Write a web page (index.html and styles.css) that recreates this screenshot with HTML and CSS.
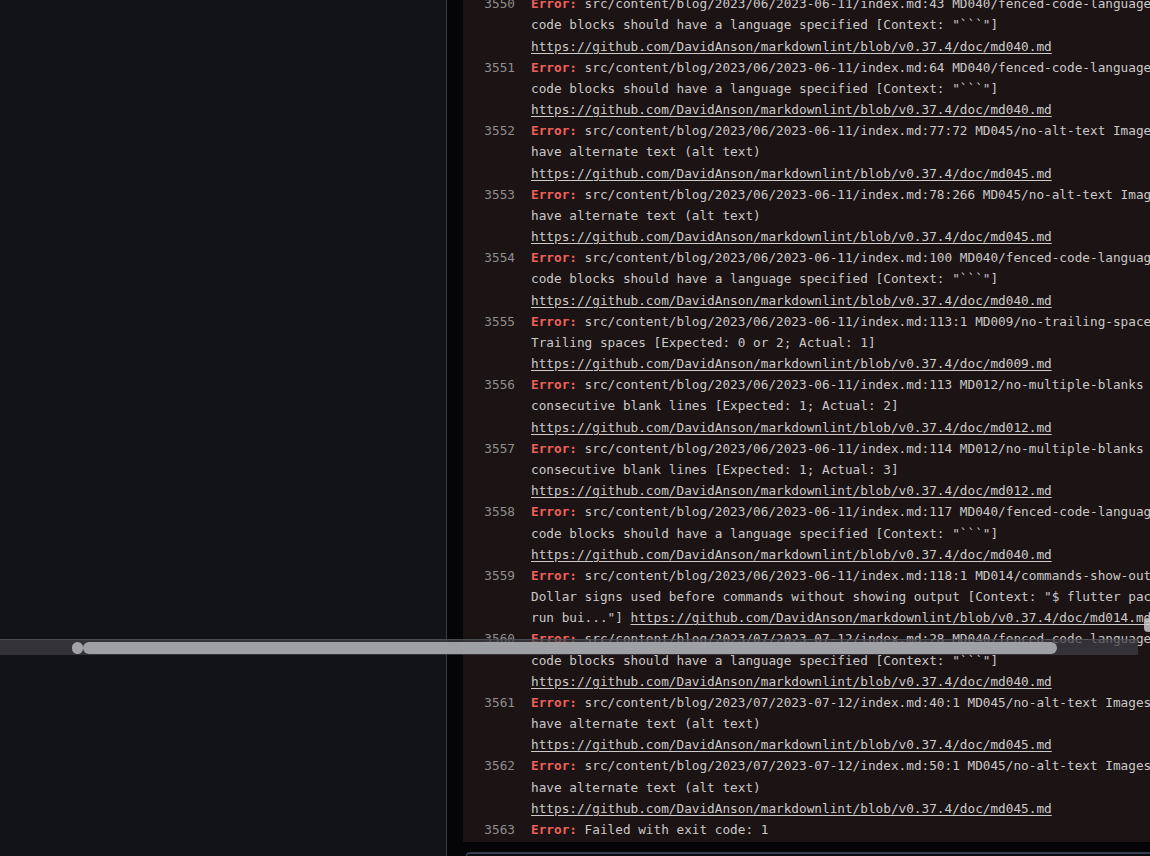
FILE: index.html
```html
<!DOCTYPE html>
<html lang="en">
<head>
    <meta charset="UTF-8">
    <meta name="viewport" content="width=device-width, initial-scale=1.0">
    <title>Lint markdown</title>
    <link rel="stylesheet" href="styles.css">
</head>
<body>
    <div class="layout">
        <aside class="sidebar"></aside>

        <main class="main">
            <div class="log">
                <div class="log-lines">
                    <div class="entry">
                        <span class="num">3550</span>
                        <div class="msg">
                            <div class="line"><span class="err">Error:</span> src/content/blog/2023/06/2023-06-11/index.md:43 MD040/fenced-code-language Fenced</div>
                            <div class="line">code blocks should have a language specified [Context: "```"]</div>
                            <div class="line"><a href="#">https://github.com/DavidAnson/markdownlint/blob/v0.37.4/doc/md040.md</a></div>
                        </div>
                    </div>
                    <div class="entry">
                        <span class="num">3551</span>
                        <div class="msg">
                            <div class="line"><span class="err">Error:</span> src/content/blog/2023/06/2023-06-11/index.md:64 MD040/fenced-code-language Fenced</div>
                            <div class="line">code blocks should have a language specified [Context: "```"]</div>
                            <div class="line"><a href="#">https://github.com/DavidAnson/markdownlint/blob/v0.37.4/doc/md040.md</a></div>
                        </div>
                    </div>
                    <div class="entry">
                        <span class="num">3552</span>
                        <div class="msg">
                            <div class="line"><span class="err">Error:</span> src/content/blog/2023/06/2023-06-11/index.md:77:72 MD045/no-alt-text Images should</div>
                            <div class="line">have alternate text (alt text)</div>
                            <div class="line"><a href="#">https://github.com/DavidAnson/markdownlint/blob/v0.37.4/doc/md045.md</a></div>
                        </div>
                    </div>
                    <div class="entry">
                        <span class="num">3553</span>
                        <div class="msg">
                            <div class="line"><span class="err">Error:</span> src/content/blog/2023/06/2023-06-11/index.md:78:266 MD045/no-alt-text Images should</div>
                            <div class="line">have alternate text (alt text)</div>
                            <div class="line"><a href="#">https://github.com/DavidAnson/markdownlint/blob/v0.37.4/doc/md045.md</a></div>
                        </div>
                    </div>
                    <div class="entry">
                        <span class="num">3554</span>
                        <div class="msg">
                            <div class="line"><span class="err">Error:</span> src/content/blog/2023/06/2023-06-11/index.md:100 MD040/fenced-code-language Fenced</div>
                            <div class="line">code blocks should have a language specified [Context: "```"]</div>
                            <div class="line"><a href="#">https://github.com/DavidAnson/markdownlint/blob/v0.37.4/doc/md040.md</a></div>
                        </div>
                    </div>
                    <div class="entry">
                        <span class="num">3555</span>
                        <div class="msg">
                            <div class="line"><span class="err">Error:</span> src/content/blog/2023/06/2023-06-11/index.md:113:1 MD009/no-trailing-spaces</div>
                            <div class="line">Trailing spaces [Expected: 0 or 2; Actual: 1]</div>
                            <div class="line"><a href="#">https://github.com/DavidAnson/markdownlint/blob/v0.37.4/doc/md009.md</a></div>
                        </div>
                    </div>
                    <div class="entry">
                        <span class="num">3556</span>
                        <div class="msg">
                            <div class="line"><span class="err">Error:</span> src/content/blog/2023/06/2023-06-11/index.md:113 MD012/no-multiple-blanks Multiple</div>
                            <div class="line">consecutive blank lines [Expected: 1; Actual: 2]</div>
                            <div class="line"><a href="#">https://github.com/DavidAnson/markdownlint/blob/v0.37.4/doc/md012.md</a></div>
                        </div>
                    </div>
                    <div class="entry">
                        <span class="num">3557</span>
                        <div class="msg">
                            <div class="line"><span class="err">Error:</span> src/content/blog/2023/06/2023-06-11/index.md:114 MD012/no-multiple-blanks Multiple</div>
                            <div class="line">consecutive blank lines [Expected: 1; Actual: 3]</div>
                            <div class="line"><a href="#">https://github.com/DavidAnson/markdownlint/blob/v0.37.4/doc/md012.md</a></div>
                        </div>
                    </div>
                    <div class="entry">
                        <span class="num">3558</span>
                        <div class="msg">
                            <div class="line"><span class="err">Error:</span> src/content/blog/2023/06/2023-06-11/index.md:117 MD040/fenced-code-language Fenced</div>
                            <div class="line">code blocks should have a language specified [Context: "```"]</div>
                            <div class="line"><a href="#">https://github.com/DavidAnson/markdownlint/blob/v0.37.4/doc/md040.md</a></div>
                        </div>
                    </div>
                    <div class="entry">
                        <span class="num">3559</span>
                        <div class="msg">
                            <div class="line"><span class="err">Error:</span> src/content/blog/2023/06/2023-06-11/index.md:118:1 MD014/commands-show-output</div>
                            <div class="line">Dollar signs used before commands without showing output [Context: "$ flutter packages pub</div>
                            <div class="line">run bui..."] <a href="#">https://github.com/DavidAnson/markdownlint/blob/v0.37.4/doc/md014.md</a></div>
                        </div>
                    </div>
                    <div class="entry">
                        <span class="num">3560</span>
                        <div class="msg">
                            <div class="line"><span class="err">Error:</span> src/content/blog/2023/07/2023-07-12/index.md:28 MD040/fenced-code-language Fenced</div>
                            <div class="line">code blocks should have a language specified [Context: "```"]</div>
                            <div class="line"><a href="#">https://github.com/DavidAnson/markdownlint/blob/v0.37.4/doc/md040.md</a></div>
                        </div>
                    </div>
                    <div class="entry">
                        <span class="num">3561</span>
                        <div class="msg">
                            <div class="line"><span class="err">Error:</span> src/content/blog/2023/07/2023-07-12/index.md:40:1 MD045/no-alt-text Images should</div>
                            <div class="line">have alternate text (alt text)</div>
                            <div class="line"><a href="#">https://github.com/DavidAnson/markdownlint/blob/v0.37.4/doc/md045.md</a></div>
                        </div>
                    </div>
                    <div class="entry">
                        <span class="num">3562</span>
                        <div class="msg">
                            <div class="line"><span class="err">Error:</span> src/content/blog/2023/07/2023-07-12/index.md:50:1 MD045/no-alt-text Images should</div>
                            <div class="line">have alternate text (alt text)</div>
                            <div class="line"><a href="#">https://github.com/DavidAnson/markdownlint/blob/v0.37.4/doc/md045.md</a></div>
                        </div>
                    </div>
                    <div class="entry">
                        <span class="num">3563</span>
                        <div class="msg">
                            <div class="line"><span class="err">Error:</span> Failed with exit code: 1</div>
                        </div>
                    </div>
                </div>
                <div class="vscroll"></div>
            </div>
            <div class="next-step"></div>
        </main>
    </div>

    <!-- overlay scrollbar sitting over the page -->
    <div class="hscroll">
        <div class="hscroll-nub"></div>
        <div class="hscroll-thumb"></div>
    </div>
</body>
</html>
```

FILE: styles.css
```css
html, body {
    margin: 0;
    height: 100%;
    overflow: hidden;
}

body {
    background-color: #121317;
    font-family: 'DejaVu Sans Mono', 'Liberation Mono', monospace;
}

.layout {
    display: flex;
    height: 856px;
}

.sidebar {
    width: 446px;
    flex-shrink: 0;
    background-color: #121317;
    border-right: 1px solid #3a3d44;
}

.main {
    flex: 1;
    display: flex;
    flex-direction: column;
    background-color: #050508;
    padding-left: 16px;
    min-width: 0;
}

.log {
    position: relative;
    height: 842px;
    flex-shrink: 0;
    background-color: #1b1314;
    overflow: hidden;
}

.log-lines {
    margin-top: -6.8px;
    font-size: 12.72px;
    line-height: 21.17px;
    color: #cbc8c8;
}

.entry {
    display: flex;
    gap: 16px;
}

.num {
    width: 52px;
    flex-shrink: 0;
    text-align: right;
    color: #918e8e;
}

.line {
    white-space: pre;
}

.err {
    color: #f0605a;
    font-weight: bold;
}

.line a {
    color: #cdcaca;
    text-decoration: underline;
    text-underline-offset: 2px;
}

.vscroll {
    position: absolute;
    right: -2px;
    top: 618px;
    width: 8px;
    height: 14px;
    border-radius: 4px;
    background-color: rgba(200, 200, 202, 0.85);
}

.next-step {
    margin-top: 10px;
    margin-left: 3px;
    flex: 1;
    border-top: 2px solid #3b4050;
    border-left: 1px solid #3b4050;
    border-radius: 6px 0 0 0;
    background-color: #0b0c12;
}

.hscroll {
    position: absolute;
    left: 0;
    top: 639px;
    width: 1138px;
    height: 15px;
    background-color: rgba(62, 63, 68, 0.72);
    border-top: 1px solid rgba(90, 92, 98, 0.6);
}

.hscroll-nub {
    position: absolute;
    left: 72px;
    top: 2px;
    width: 11px;
    height: 12px;
    border-radius: 6px;
    background-color: #a2a3a6;
}

.hscroll-thumb {
    position: absolute;
    left: 83px;
    top: 2px;
    width: 974px;
    height: 12px;
    border-radius: 6px;
    background-color: rgba(168, 169, 172, 0.92);
}
```
